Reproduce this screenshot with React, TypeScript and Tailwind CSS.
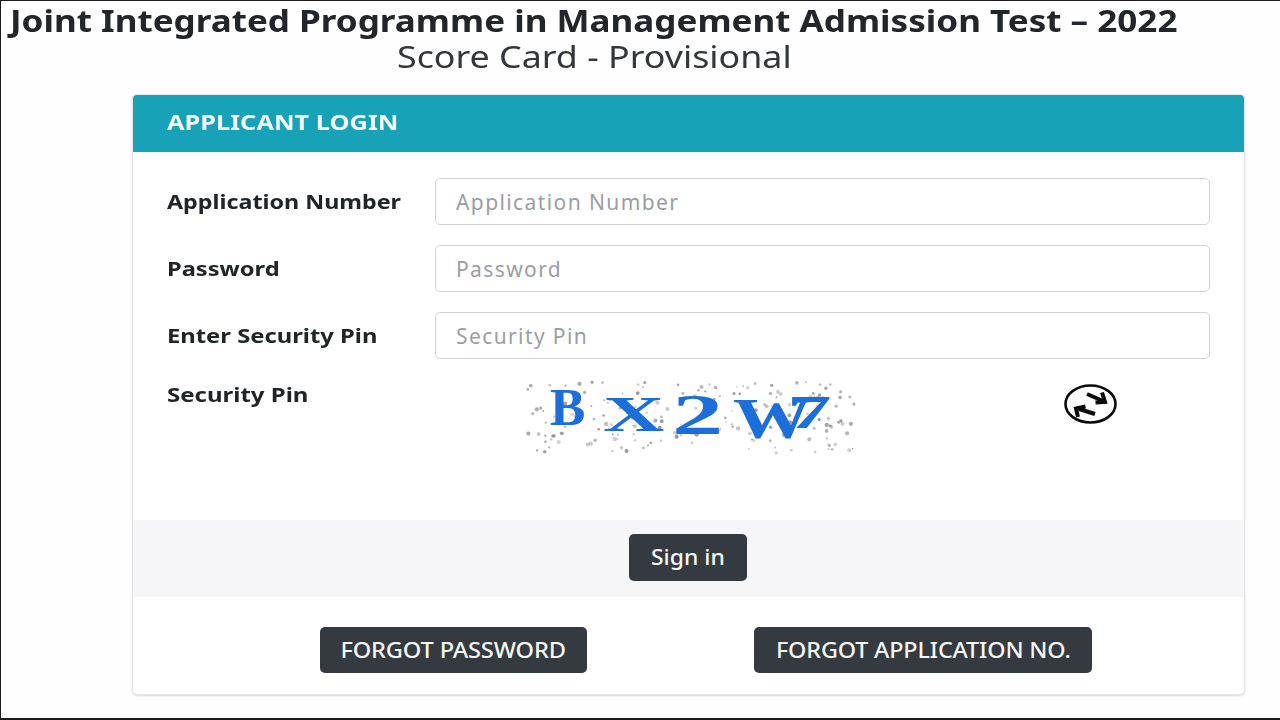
import React from "react";

const font = "font-['Noto_Sans','Open_Sans',sans-serif]";

function dots() {
  const out: { x: number; y: number; r: number; o: number }[] = [];
  let s = 12345;
  const rnd = () => {
    s = (s * 16807) % 2147483647;
    return s / 2147483647;
  };
  for (let i = 0; i < 190; i++) {
    out.push({ x: 2 + rnd() * 328, y: 2 + rnd() * 72, r: 0.8 + rnd() * 1.4, o: 0.3 + rnd() * 0.45 });
  }
  return out;
}

function Captcha() {
  const f = { fontFamily: "'Liberation Serif', serif", fontWeight: 700, fill: "#1c6fd8" };
  return (
    <svg width="332" height="76" viewBox="0 0 332 76" className="block blur-[0.4px]">
      {dots().map((d, i) => (
        <circle key={i} cx={d.x} cy={d.y} r={d.r} fill="#777" opacity={d.o} />
      ))}
      <text transform="translate(25 45)" fontSize="53" {...f}>B</text>
      <text transform="translate(78 51) scale(1.7 1)" fontSize="50" {...f}>X</text>
      <text transform="translate(147 54) scale(1.8 1)" fontSize="57" {...f}>2</text>
      <text transform="translate(208 58) scale(1.4 1)" fontSize="56" {...f}>W</text>
      <text transform="translate(262 48) scale(1.9 1)" fontSize="47" {...f}>7</text>
    </svg>
  );
}

function Refresh() {
  return (
    <svg width="54" height="42" viewBox="0 0 54 42" className="block">
      <ellipse cx="26.5" cy="20" rx="25" ry="18.5" fill="white" stroke="#0a0a0a" strokeWidth="2.6" />
      <path d="M23 10L39 17" fill="none" stroke="#0a0a0a" strokeWidth="4" />
      <path d="M38 8.5L41 18L31.5 18.5" fill="none" stroke="#0a0a0a" strokeWidth="4" />
      <path d="M31 30L15 25" fill="none" stroke="#0a0a0a" strokeWidth="4" />
      <path d="M14 33L12 24.5L21.5 22.5" fill="none" stroke="#0a0a0a" strokeWidth="4" />
    </svg>
  );
}

function Row({ label, labelClass, placeholder }: { label: string; labelClass: string; placeholder: string }) {
  return (
    <div className="flex items-center h-[47px] mb-[20px]">
      <label className="w-[268px] shrink-0 text-[19.5px] font-bold text-[#212529]">
        <span className={`inline-block origin-left whitespace-nowrap ${labelClass}`}>{label}</span>
      </label>
      <input
        readOnly
        placeholder={placeholder}
        className="w-[775px] h-[47px] rounded-[5px] border border-[#cfd3d6] bg-white px-5 text-[21px] tracking-[1.4px] placeholder:text-[#9a9ea3] outline-none"
      />
    </div>
  );
}

export default function App() {
  return (
    <div className={`${font} w-[1280px] h-[720px] overflow-hidden bg-white box-border border-t border-l border-b-2 border-[#1c1c1c] border-r-0`}>
      <div className="w-full h-full bg-[#fefefe] flex flex-col">
        <h1 className="pl-[9px] pt-[2px] h-[38px] text-[30px] leading-[36px] font-bold text-[#22252a] whitespace-nowrap">
          <span className="inline-block origin-left scale-x-[1.168]">Joint Integrated Programme in Management Admission Test – 2022</span>
        </h1>
        <h2 className="pl-[396px] h-[35px] text-[31px] leading-[35px] font-normal text-[#33373b] whitespace-nowrap">
          <span className="inline-block origin-left scale-x-[1.155]">Score Card - Provisional</span>
        </h2>
        <div className="ml-[131px] mt-[20px] w-[1113px] h-[601px] rounded-[5px] bg-white border border-[#e6e6e6] shadow-[0_1px_2px_rgba(0,0,0,0.15)] flex flex-col overflow-hidden">
          <div className="h-[57px] shrink-0 bg-[#17a2b8] flex items-center pl-[34px] pb-[2px] text-[21.5px] font-bold text-[#f4fbfc]">
            <span className="inline-block origin-left scale-x-[1.18]">APPLICANT LOGIN</span>
          </div>
          <div className="pl-[34px] pt-[26px] h-[368px] shrink-0">
            <Row label="Application Number" labelClass="scale-x-[1.194]" placeholder="Application Number" />
            <Row label="Password" labelClass="scale-x-[1.212]" placeholder="Password" />
            <Row label="Enter Security Pin" labelClass="scale-x-[1.22]" placeholder="Security Pin" />
            <div className="flex items-start -mt-[1px]">
              <div className="w-[358px] shrink-0 text-[19.5px] font-bold text-[#212529] pt-[2px]">
                <span className="inline-block origin-left scale-x-[1.23]">Security Pin</span>
              </div>
              <div className="mt-[2px]"><Captcha /></div>
              <div className="ml-[207px] mt-[6px]"><Refresh /></div>
            </div>
          </div>
          <div className="h-[77px] shrink-0 bg-[#f6f5f7] flex items-center justify-center pr-[2px] pb-[3px]">
            <button className="w-[118px] h-[47px] rounded-[5px] bg-[#343a40] text-[#f5f6f6] text-[21px] font-medium">
              <span className="inline-block scale-x-[1.09] translate-y-[1px]">Sign in</span>
            </button>
          </div>
          <div className="flex pl-[187px] pt-[30px] gap-[167px]">
            <button className="w-[267px] h-[46px] rounded-[5px] bg-[#343a40] text-[#f5f6f6] text-[21px] font-medium whitespace-nowrap">
              <span className="inline-block scale-x-[1.126] tracking-[-0.15px] translate-y-[1px]">FORGOT PASSWORD</span>
            </button>
            <button className="w-[338px] h-[46px] rounded-[5px] bg-[#343a40] text-[#f5f6f6] text-[21px] font-medium whitespace-nowrap">
              <span className="inline-block scale-x-[1.114] tracking-[-0.15px] translate-y-[1px]">FORGOT APPLICATION NO.</span>
            </button>
          </div>
        </div>
      </div>
    </div>
  );
}
